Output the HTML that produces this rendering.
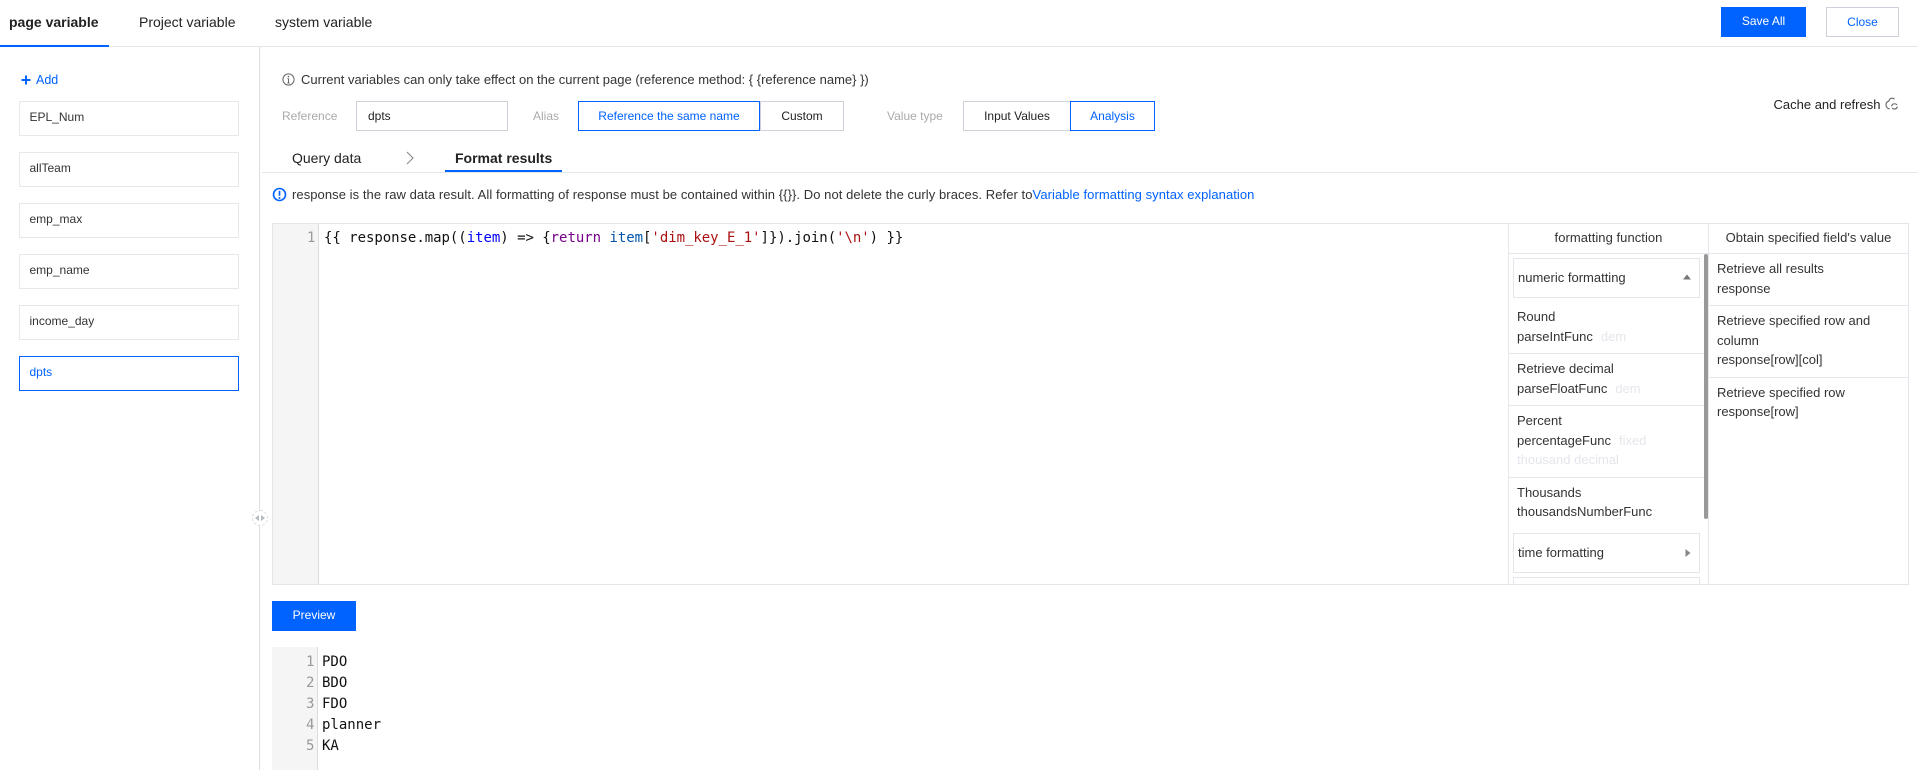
<!DOCTYPE html>
<html><head><meta charset="utf-8"><style>
html,body{margin:0;padding:0;background:#fff}
#p{position:relative;width:1918px;height:770px;overflow:hidden;background:#fff;font-family:"Liberation Sans",sans-serif;font-size:12px;color:#222}
#p div,#p span.a{position:absolute;box-sizing:border-box}
.t{white-space:nowrap;line-height:18px;height:18px}
.l{background:#e5e7ec}
.i{left:19px;width:220px;height:35px;border:1px solid #e6e8ec;padding-left:9.5px;line-height:30px;font-size:12px;color:#333}
.b{border:1px solid #ccd1da;height:30px;line-height:28px;text-align:center;color:#222;font-size:12px}
.on{border-color:#0062ff;color:#0062ff}
.g{color:#aaa}
.m{font-family:"DejaVu Sans Mono",monospace;font-size:14px;white-space:pre;line-height:21px;height:21px}
.n{color:#999}
.s{left:1517px;font-size:13px;color:#333}
.d{color:#e4e6eb}
.box{left:1513px;width:187px;border:1px solid #e3e5ea;background:#fff}
</style></head><body><div id="p">

<div class="l" style="left:0;top:46px;width:1918px;height:1px"></div>
<div style="left:0;top:45px;width:109px;height:2px;background:#0062ff"></div>
<div class="t" style="left:9px;top:13px;font-size:14px;font-weight:bold;color:#222">page variable</div>
<div class="t" style="left:139px;top:13px;font-size:14px">Project variable</div>
<div class="t" style="left:275px;top:13px;font-size:14px">system variable</div>
<div style="left:1721px;top:7px;width:85px;height:30px;background:#0062ff;color:#fff;text-align:center;line-height:29px">Save All</div>
<div class="b" style="left:1826px;top:7px;width:73px;color:#0062ff;line-height:28px">Close</div>

<div style="left:259px;top:47px;width:1px;height:723px;background:#dcdee3"></div>
<div style="left:252px;top:510px;width:16px;height:16px;border-radius:50%;border:1px dashed #ddd;background:#fff"></div>
<svg style="position:absolute;left:254px;top:514px" width="12" height="8"><path d="M1 4L5 1V7Z M11 4L7 1V7Z" fill="#b5b8bd"/></svg>

<svg style="position:absolute;left:21px;top:75px" width="10" height="10"><path d="M5 0.5V9.5M0.5 5H9.5" stroke="#0062ff" stroke-width="2"/></svg>
<div class="t" style="left:36px;top:71px;color:#0062ff;font-size:12.5px">Add</div>
<div class="i" style="top:101px">EPL_Num</div>
<div class="i" style="top:152px">allTeam</div>
<div class="i" style="top:203px">emp_max</div>
<div class="i" style="top:254px">emp_name</div>
<div class="i" style="top:305px">income_day</div>
<div class="i" style="top:356px;border-color:#0062ff;color:#0062ff">dpts</div>

<svg style="position:absolute;left:282px;top:73px" width="13" height="13"><circle cx="6.5" cy="6.5" r="5.6" fill="none" stroke="#666" stroke-width="1"/><path d="M6.5 5.6V10M5.5 5.6H6.5M5.4 10H7.6" stroke="#666" stroke-width="1" fill="none"/><circle cx="6.5" cy="3.6" r=".8" fill="#666"/></svg>
<div class="t" style="left:301px;top:71px;font-size:13px;color:#333">Current variables can only take effect on the current page (reference method: { {reference name} })</div>

<div class="t g" style="left:282px;top:107px">Reference</div>
<div class="b" style="left:356px;top:101px;width:152px;text-align:left;padding-left:11px">dpts</div>
<div class="t g" style="left:533px;top:107px">Alias</div>
<div class="b" style="left:760px;top:101px;width:84px">Custom</div>
<div class="b on" style="left:578px;top:101px;width:182px">Reference the same name</div>
<div class="t g" style="left:887px;top:107px">Value type</div>
<div class="b" style="left:963px;top:101px;width:108px">Input Values</div>
<div class="b on" style="left:1070px;top:101px;width:85px">Analysis</div>
<div class="t" style="left:1773.5px;top:96px;font-size:13px">Cache and refresh</div>
<svg style="position:absolute;left:1885px;top:97px" width="14" height="14"><path d="M9.5 2.2C8.8 1.5 8 1.2 7 1.2C5.2 1.2 4.2 2.6 3.8 4.2C2.2 4.6 1 5.9 1 7.8C1 10 2.5 11.8 4.8 11.8" fill="none" stroke="#666" stroke-width="1.1"/><path d="M6.6 9.4A3 3 0 0 1 12 8M12.4 9.6A3 3 0 0 1 7.2 11" fill="none" stroke="#666" stroke-width="1.1"/></svg>

<div class="t" style="left:292px;top:149px;font-size:14px">Query data</div>
<svg style="position:absolute;left:405px;top:151px" width="10" height="14"><path d="M2 1L8 7L2 13" fill="none" stroke="#8a8a8a" stroke-width="1.1"/></svg>
<div class="t" style="left:455px;top:149px;font-size:14px;font-weight:bold">Format results</div>
<div class="l" style="left:262px;top:172px;width:1656px;height:1px"></div>
<div style="left:445px;top:170px;width:117px;height:2px;background:#0062ff"></div>

<svg style="position:absolute;left:272px;top:187px" width="15" height="15"><circle cx="7.5" cy="7.5" r="6" fill="none" stroke="#0062ff" stroke-width="1.6"/><path d="M7.5 3.8V8.8" stroke="#0062ff" stroke-width="1.7"/><circle cx="7.5" cy="11" r="1" fill="#0062ff"/></svg>
<div class="t" style="left:292px;top:186px;font-size:13px;letter-spacing:.065px;color:#333">response is the raw data result. All formatting of response must be contained within {{}}. Do not delete the curly braces. Refer to<span style="color:#0062ff">Variable formatting syntax explanation</span></div>

<div style="left:272px;top:223px;width:1637px;height:362px;border:1px solid #e3e5ea"></div>
<div style="left:273px;top:224px;width:46px;height:360px;background:#f5f5f5;border-right:1px solid #dcdcdc"></div>
<div class="m n" style="left:307px;top:228px">1</div>
<div class="m" style="left:324px;top:228px;color:#111;letter-spacing:-.035px">{{ response.map((<span style="color:#00f">item</span>) =&gt; {<span style="color:#708">return</span> <span style="color:#05a">item</span>[<span style="color:#a11">'dim_key_E_1'</span>]}).join(<span style="color:#a11">'\n'</span>) }}</div>

<div class="l" style="left:1508px;top:223px;width:1px;height:362px"></div>
<div class="l" style="left:1708px;top:223px;width:1px;height:362px"></div>
<div class="l" style="left:1508px;top:253px;width:401px;height:1px"></div>
<div class="t" style="left:1509px;width:199px;top:229px;text-align:center;font-size:13px;letter-spacing:.05px;color:#333">formatting function</div>
<div class="t" style="left:1709px;width:199px;top:229px;text-align:center;font-size:13px;letter-spacing:.05px;color:#333">Obtain specified field's value</div>

<div class="box" style="top:258px;height:40px"></div>
<div class="t" style="left:1518px;top:269px;font-size:13px;color:#333">numeric formatting</div>
<svg style="position:absolute;left:1682px;top:273px" width="10" height="8"><path d="M1 6.5L5 1.5L9 6.5Z" fill="#777"/></svg>
<div class="t s" style="top:308px">Round</div>
<div class="t s" style="top:328px">parseIntFunc<span style="margin-left:8px" class="d">dem</span></div>
<div class="l" style="left:1509px;top:353px;width:195px;height:1px"></div>
<div class="t s" style="top:360px">Retrieve decimal</div>
<div class="t s" style="top:380px">parseFloatFunc<span style="margin-left:8px" class="d">dem</span></div>
<div class="l" style="left:1509px;top:405px;width:195px;height:1px"></div>
<div class="t s" style="top:412px">Percent</div>
<div class="t s" style="top:432px">percentageFunc<span style="margin-left:8px" class="d">fixed</span></div>
<div class="t s d" style="top:451px">thousand decimal</div>
<div class="l" style="left:1509px;top:477px;width:195px;height:1px"></div>
<div class="t s" style="top:484px">Thousands</div>
<div class="t s" style="top:503px">thousandsNumberFunc</div>
<div class="box" style="top:533px;height:39.5px"></div>
<div class="t" style="left:1518px;top:544px;font-size:13px;color:#333">time formatting</div>
<svg style="position:absolute;left:1684px;top:548px" width="8" height="10"><path d="M1.5 1L6.5 5L1.5 9Z" fill="#888"/></svg>
<div class="box" style="top:577px;height:7px;border-bottom:0"></div>
<div style="left:1704px;top:254px;width:4px;height:265px;background:#999;border-radius:2px"></div>

<div class="t s" style="left:1717px;top:260px">Retrieve all results</div>
<div class="t s" style="left:1717px;top:280px">response</div>
<div class="l" style="left:1709px;top:305px;width:199px;height:1px"></div>
<div class="t s" style="left:1717px;top:312px">Retrieve specified row and</div>
<div class="t s" style="left:1717px;top:332px">column</div>
<div class="t s" style="left:1717px;top:351px">response[row][col]</div>
<div class="l" style="left:1709px;top:377px;width:199px;height:1px"></div>
<div class="t s" style="left:1717px;top:384px">Retrieve specified row</div>
<div class="t s" style="left:1717px;top:403px">response[row]</div>

<div style="left:272px;top:601px;width:84px;height:30px;background:#0062ff;color:#fff;text-align:center;line-height:29px">Preview</div>

<div style="left:272px;top:647px;width:46px;height:123px;background:#f5f5f5;border-right:1px solid #dcdcdc"></div>
<div class="m n" style="left:306px;top:652px">1</div><div class="m" style="left:322px;top:652px;color:#111">PDO</div>
<div class="m n" style="left:306px;top:673px">2</div><div class="m" style="left:322px;top:673px;color:#111">BDO</div>
<div class="m n" style="left:306px;top:694px">3</div><div class="m" style="left:322px;top:694px;color:#111">FDO</div>
<div class="m n" style="left:306px;top:715px">4</div><div class="m" style="left:322px;top:715px;color:#111">planner</div>
<div class="m n" style="left:306px;top:736px">5</div><div class="m" style="left:322px;top:736px;color:#111">KA</div>

</div></body></html>
